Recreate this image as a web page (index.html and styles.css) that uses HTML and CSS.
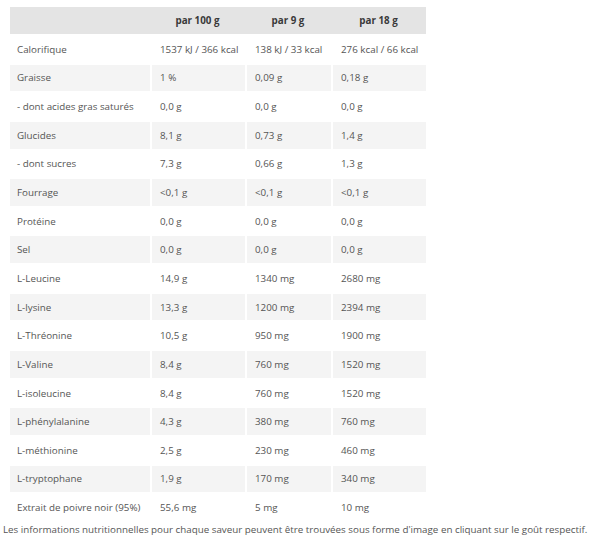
FILE: index.html
```
<!DOCTYPE html>
<html lang="fr">
<head>
<meta charset="utf-8">
<link rel="stylesheet" href="styles.css">
</head>
<body>
<table class="nutri">
<thead>
<tr><th class="c1"></th><th class="c2">par 100 g</th><th class="c3">par 9 g</th><th class="c4">par 18 g</th></tr>
</thead>
<tbody>
<tr><td>Calorifique</td><td>1537 kJ / 366 kcal</td><td>138 kJ / 33 kcal</td><td>276 kcal / 66 kcal</td></tr>
<tr class="alt"><td>Graisse</td><td>1 %</td><td>0,09 g</td><td>0,18 g</td></tr>
<tr><td>- dont acides gras saturés</td><td>0,0 g</td><td>0,0 g</td><td>0,0 g</td></tr>
<tr class="alt"><td>Glucides</td><td>8,1 g</td><td>0,73 g</td><td>1,4 g</td></tr>
<tr><td>- dont sucres</td><td>7,3 g</td><td>0,66 g</td><td>1,3 g</td></tr>
<tr class="alt"><td>Fourrage</td><td>&lt;0,1 g</td><td>&lt;0,1 g</td><td>&lt;0,1 g</td></tr>
<tr><td>Protéine</td><td>0,0 g</td><td>0,0 g</td><td>0,0 g</td></tr>
<tr class="alt"><td>Sel</td><td>0,0 g</td><td>0,0 g</td><td>0,0 g</td></tr>
<tr><td>L-Leucine</td><td>14,9 g</td><td>1340 mg</td><td>2680 mg</td></tr>
<tr class="alt"><td>L-lysine</td><td>13,3 g</td><td>1200 mg</td><td>2394 mg</td></tr>
<tr><td>L-Thréonine</td><td>10,5 g</td><td>950 mg</td><td>1900 mg</td></tr>
<tr class="alt"><td>L-Valine</td><td>8,4 g</td><td>760 mg</td><td>1520 mg</td></tr>
<tr><td>L-isoleucine</td><td>8,4 g</td><td>760 mg</td><td>1520 mg</td></tr>
<tr class="alt"><td>L-phénylalanine</td><td>4,3 g</td><td>380 mg</td><td>760 mg</td></tr>
<tr><td>L-méthionine</td><td>2,5 g</td><td>230 mg</td><td>460 mg</td></tr>
<tr class="alt"><td>L-tryptophane</td><td>1,9 g</td><td>170 mg</td><td>340 mg</td></tr>
<tr><td>Extrait de poivre noir (95%)</td><td>55,6 mg</td><td>5 mg</td><td>10 mg</td></tr>
</tbody>
</table>
<p class="note">Les informations nutritionnelles pour chaque saveur peuvent être trouvées sous forme d'image en cliquant sur le goût respectif.</p>
</body>
</html>
```

FILE: styles.css
```
html, body {
  margin: 0;
  padding: 0;
  background: #fff;
}
body {
  font-family: "Open Sans", "Liberation Sans", sans-serif;
  font-size: 9.8px;
  color: #555;
}
.nutri {
  margin: 7px 0 0 10px;
  width: 416px;
  border-collapse: separate;
  border-spacing: 0;
  table-layout: fixed;
}
.nutri th {
  background: #e4e4e4;
  color: #3a3a3a;
  font-weight: 700;
  height: 27px;
  padding: 0;
  text-align: center;
}
.c1 { width: 140px; }
.c2 { width: 95px; }
.c3 { width: 86px; }
.c4 { width: 95px; }
.nutri td {
  height: 26.65px;
  padding: 0 0 0 8px;
  border-top: 2px solid #fff;
  white-space: nowrap;
  overflow: hidden;
}
.nutri td:first-child {
  padding-left: 7px;
}
.nutri td + td {
  border-left: 2px solid #fff;
}
.nutri tr.alt td {
  background: #f4f4f4;
}
.note {
  margin: 2px 0 0 3px;
  white-space: nowrap;
  color: #555;
}
```
